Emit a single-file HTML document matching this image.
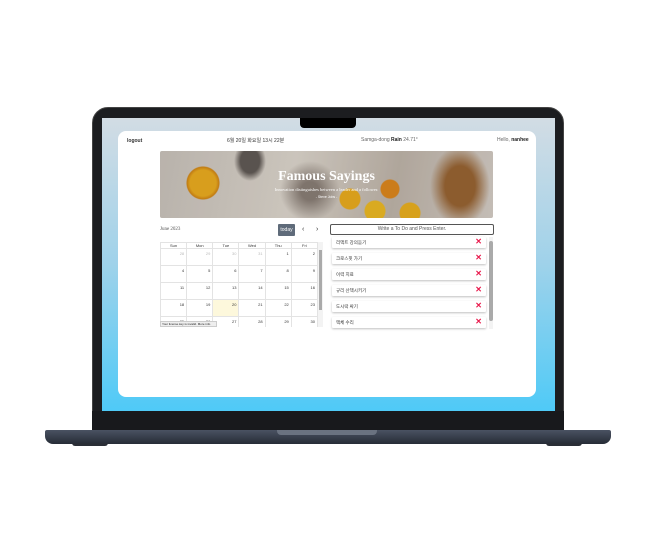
<!DOCTYPE html>
<html><head><meta charset="utf-8"><style>
*{margin:0;padding:0;box-sizing:border-box}
body{width:650px;height:550px;background:#fff;position:relative;overflow:hidden;font-family:"Liberation Sans","Noto Sans CJK KR",sans-serif}
.abs{position:absolute}
.lid{left:92px;top:107px;width:472px;height:322px;background:#1c1d20;border-radius:16px 16px 0 0;border:1px solid #444}
.screen{left:102px;top:118px;width:453px;height:293px;background:linear-gradient(#d2dce4,#9fd2ea 50%,#4fcaf7);}
.notch{left:300px;top:118px;width:56px;height:10px;background:#000;border-radius:0 0 4px 4px}
.card{left:118px;top:131px;width:418px;height:266px;background:#fff;border-radius:8px}
.base{left:45px;top:430px;width:566px;height:14px;background:linear-gradient(#4a5262,#262c36);border-radius:2px 2px 8px 8px}
.hinge{left:277px;top:430px;width:100px;height:5px;background:#6a7280;border-radius:0 0 4px 4px}
.t{font-size:5px;color:#333}
.banner{left:160px;top:151px;width:333px;height:67px;border-radius:2px;overflow:hidden;
background:
radial-gradient(circle at 43px 32px,#f4b21c 13px,#d98a10 16px,transparent 17px),
radial-gradient(circle at 190px 48px,#f3b21a 10px,transparent 11px),
radial-gradient(circle at 215px 60px,#f5c020 10px,transparent 11px),
radial-gradient(circle at 250px 62px,#f2b61a 10px,transparent 11px),
radial-gradient(circle at 230px 38px,#e48a18 9px,transparent 10px),
radial-gradient(ellipse 16px 20px at 90px 10px,#5f5a56 60%,transparent 100%),
radial-gradient(ellipse 30px 40px at 300px 35px,#9a6430 50%,transparent 100%),
radial-gradient(ellipse 30px 30px at 150px 40px,#8a8078 30%,transparent 100%),
linear-gradient(100deg,#cfcac3,#e4dfd6 40%,#c4bbb0 70%,#dcd6cf);}
.banner .dark{position:absolute;inset:0;background:rgba(60,50,40,.15)}
th,td{border:1px solid #e3e3e3;font-size:4px;color:#333;font-weight:normal}
table{border-collapse:collapse}
td{text-align:right;vertical-align:top;height:17px;padding:2px 2px}
.item{position:absolute;left:332px;width:154px;height:11px;background:#fff;box-shadow:0 1px 2px rgba(0,0,0,.25);border-radius:1px;font-size:4.5px;color:#333;padding:3px 4px}
.item b{position:absolute;right:4px;top:1px;color:#e8174a;font-size:8px;line-height:8px}
</style></head><body>
<div class="abs lid"></div>
<div class="abs screen"></div>
<div class="abs notch"></div>
<div class="abs card"></div>
<div class="abs" style="left:92px;top:411px;width:472px;height:19px;background:#18191c"></div>
<div class="abs base"></div>
<div class="abs hinge"></div>
<div class="abs" style="left:72px;top:443px;width:36px;height:3px;background:#2a2e36;border-radius:0 0 3px 3px"></div>
<div class="abs" style="left:546px;top:443px;width:36px;height:3px;background:#2a2e36;border-radius:0 0 3px 3px"></div>

<div class="abs t" style="left:127px;top:138px;font-weight:bold">logout</div>
<div class="abs t" style="left:227px;top:137px">6월 20일 화요일 13시 22분</div>
<div class="abs t" style="left:361px;top:137px;color:#666">Samga-dong <b style="color:#222">Rain</b> 24.71°</div>
<div class="abs t" style="left:497px;top:137px;color:#666">Hello, <b style="color:#222">nanhee</b></div>

<div class="abs banner"><div class="dark"></div>
<div class="abs" style="left:0;width:333px;top:18px;text-align:center;font-family:'Liberation Serif',serif;font-weight:bold;color:#fff;font-size:14px">Famous Sayings</div>
<div class="abs" style="left:0;width:333px;top:36px;text-align:center;font-family:'Liberation Serif',serif;color:#fff;font-size:4.5px">Innovation distinguishes between a leader and a follower.</div>
<div class="abs" style="left:0;width:333px;top:44px;text-align:center;color:#fff;font-size:3.5px">- Steve Jobs -</div>
</div>

<div class="abs t" style="left:160px;top:227px;font-family:'Liberation Serif',serif;color:#555">June 2023</div>
<div class="abs" style="left:278px;top:224px;width:17px;height:12px;background:#5f6b7a;border-radius:1px;color:#fff;font-size:5px;text-align:center;line-height:12px">today</div>
<div class="abs t" style="left:302px;top:226px;font-size:7px">‹</div>
<div class="abs t" style="left:316px;top:226px;font-size:7px">›</div>

<div class="abs" style="left:160px;top:242px;width:158px;height:85px;overflow:hidden">
<table style="width:158px">
<tr><th>Sun</th><th>Mon</th><th>Tue</th><th>Wed</th><th>Thu</th><th>Fri</th></tr>
<tr><td style="color:#bbb">28</td><td style="color:#bbb">29</td><td style="color:#bbb">30</td><td style="color:#bbb">31</td><td>1</td><td>2</td></tr>
<tr><td>4</td><td>5</td><td>6</td><td>7</td><td>8</td><td>9</td></tr>
<tr><td>11</td><td>12</td><td>13</td><td>14</td><td>15</td><td>16</td></tr>
<tr><td>18</td><td>19</td><td style="background:#fdf8dc">20</td><td>21</td><td>22</td><td>23</td></tr>
<tr><td>25</td><td>26</td><td>27</td><td>28</td><td>29</td><td>30</td></tr>
</table></div>
<div class="abs" style="left:160px;top:321px;width:57px;height:6px;background:#eee;border:1px solid #ccc;font-size:3px;color:#222;line-height:4px;padding-left:1px;white-space:nowrap;overflow:hidden">Your license key is invalid. More info</div>
<div class="abs" style="left:318px;top:242px;width:5px;height:85px;background:#f3f3f3"></div>
<div class="abs" style="left:319px;top:250px;width:3px;height:60px;background:#aaa"></div>

<div class="abs" style="left:330px;top:224px;width:164px;height:11px;border:1px solid #555;border-radius:2px;font-size:5px;color:#555;text-align:center;line-height:9px">Write a To Do and Press Enter.</div>
<div class="item" style="top:237px">리액트 강의듣기<b>✕</b></div>
<div class="item" style="top:253px">크로스핏 가기<b>✕</b></div>
<div class="item" style="top:269px">이력 지료<b>✕</b></div>
<div class="item" style="top:285px">규리 산책시키기<b>✕</b></div>
<div class="item" style="top:301px">도시락 싸기<b>✕</b></div>
<div class="item" style="top:317px">액체 수리<b>✕</b></div>
<div class="abs" style="left:489px;top:237px;width:4px;height:92px;background:#f3f3f3"></div>
<div class="abs" style="left:489px;top:241px;width:4px;height:80px;background:#aaa;border-radius:2px"></div>
</body></html>
